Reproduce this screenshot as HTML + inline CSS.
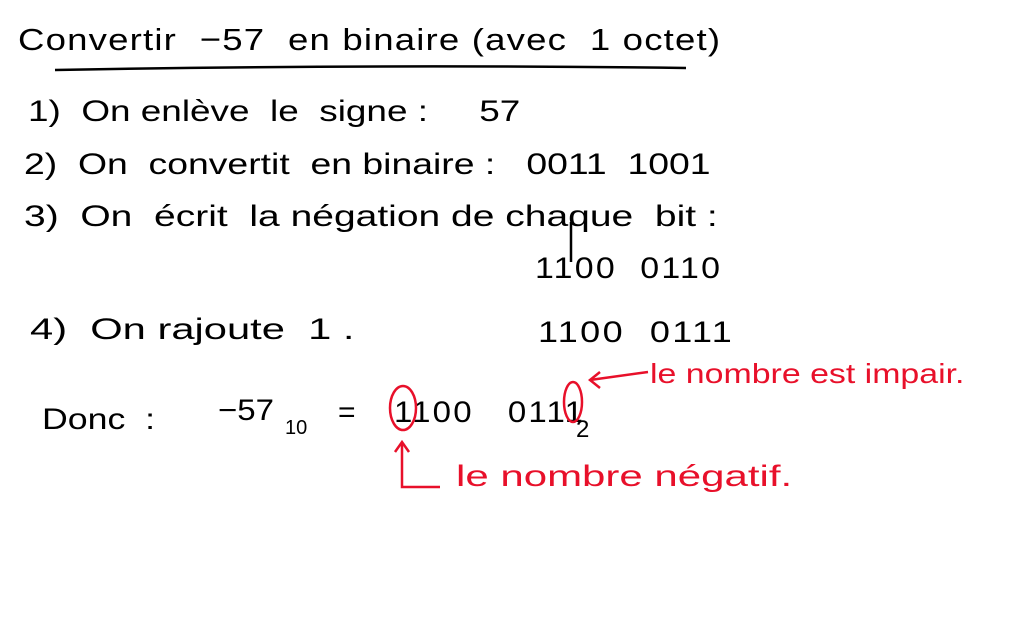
<!DOCTYPE html>
<html><head><meta charset="utf-8"><style>
html,body{margin:0;padding:0;background:#fff;}
body{width:1010px;height:638px;position:relative;overflow:hidden;font-family:"Liberation Sans",sans-serif;color:#000;}
.t{position:absolute;white-space:nowrap;font-size:30px;line-height:1;transform-origin:0 0;}
.r{color:#e8102a;}
svg{position:absolute;left:0;top:0;}
</style></head><body>
<div class="t" style="left:18px;top:24px;font-size:31px;letter-spacing:1px;transform:scaleX(1.18)">Convertir &nbsp;−57 &nbsp;en binaire (avec &nbsp;1 octet)</div>
<div class="t" style="left:28px;top:97px;transform:scaleX(1.23)">1) &nbsp;On enlève &nbsp;le &nbsp;signe : &nbsp;&nbsp;&nbsp;&nbsp;57</div>
<div class="t" style="left:24px;top:150px;transform:scaleX(1.245)">2) &nbsp;On &nbsp;convertit &nbsp;en binaire : &nbsp;&nbsp;0011 &nbsp;1001</div>
<div class="t" style="left:24px;top:202px;transform:scaleX(1.3)">3) &nbsp;On &nbsp;écrit &nbsp;la négation de chaque &nbsp;bit :</div>
<div class="t" style="left:535px;top:254px;letter-spacing:2px;transform:scaleX(1.13)">1100 &nbsp;0110</div>
<div class="t" style="left:30px;top:315px;transform:scaleX(1.39)">4) &nbsp;On rajoute &nbsp;1 .</div>
<div class="t" style="left:538px;top:318px;letter-spacing:2px;transform:scaleX(1.2)">1100 &nbsp;0111</div>
<div class="t" style="left:42px;top:405px;transform:scaleX(1.19)">Donc &nbsp;:</div>
<div class="t" style="left:218px;top:396px;transform:scaleX(1.1)">−57</div>
<div class="t" style="left:285px;top:418px;font-size:20px">10</div>
<div class="t" style="left:338px;top:398px">=</div>
<div class="t" style="left:394px;top:398px;letter-spacing:2px;transform:scaleX(1.1)">1100 &nbsp;&nbsp;0111</div>
<div class="t" style="left:576px;top:418px;font-size:24px">2</div>
<div class="t r" style="left:650px;top:360px;font-size:28px;transform:scaleX(1.21)">le nombre est impair.</div>
<div class="t r" style="left:456px;top:462px;font-size:30px;transform:scaleX(1.4)">le nombre négatif.</div>
<svg width="1010" height="638">
<path d="M55 70 Q370 64 686 68" stroke="#000" stroke-width="2.5" fill="none"/>
<path d="M571 222 L571 262" stroke="#000" stroke-width="2.5"/>
<g stroke="#e8102a" stroke-width="2.5" fill="none">
<ellipse cx="403" cy="408" rx="13" ry="22"/>
<ellipse cx="573" cy="402" rx="9" ry="20"/>
<path d="M648 372 L590 380"/>
<path d="M600 372 L590 380 L600 388"/>
<path d="M402 442 L402 487 L440 487"/>
<path d="M395 452 L402 442 L409 452"/>
</g>
</svg>
</body></html>
